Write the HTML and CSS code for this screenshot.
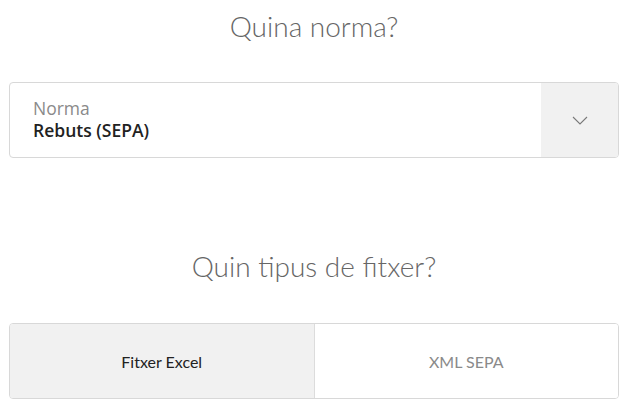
FILE: index.html
```html
<!DOCTYPE html>
<html lang="ca">
<head>
<meta charset="utf-8">
<title>Norma</title>
<link rel="stylesheet" href="styles.css">
</head>
<body>
<main class="page">
  <h1 class="title">Quina norma?</h1>
  <div class="select">
    <div class="select-body">
      <span class="select-label">Norma</span>
      <span class="select-value">Rebuts (SEPA)</span>
    </div>
    <div class="select-arrow">
      <svg width="16" height="9" viewBox="0 0 16 9" aria-hidden="true"><path d="M1 1 L8 8 L15 1" fill="none" stroke="#7a7a7a" stroke-width="1.1"/></svg>
    </div>
  </div>
  <h2 class="title title-second">Quin tipus de fitxer?</h2>
  <div class="toggle">
    <div class="toggle-btn active">Fitxer Excel</div>
    <div class="toggle-btn">XML SEPA</div>
  </div>
</main>
</body>
</html>
```

FILE: styles.css
```css
html, body {
  margin: 0;
  padding: 0;
  background: #fff;
}
.page {
  padding: 0 11px 0 9px;
  font-family: "Open Sans", "Liberation Sans", sans-serif;
}
.title {
  margin: 8px 0 0;
  font-family: Lato, "Open Sans", sans-serif;
  font-weight: 300;
  font-size: 28px;
  line-height: 36px;
  color: #666;
  text-align: center;
}
.title-second {
  margin-top: 90px;
}
.select {
  margin-top: 38px;
  height: 76px;
  box-sizing: border-box;
  border: 1px solid #d8d8d8;
  border-radius: 4px;
  display: flex;
  overflow: hidden;
}
.select-body {
  flex: 1;
  display: flex;
  flex-direction: column;
  justify-content: center;
  padding-left: 23px;
  padding-bottom: 1px;
}
.select-label {
  font-size: 17.5px;
  line-height: 22px;
  color: #8a8a8a;
}
.select-value {
  font-size: 17.5px;
  line-height: 23px;
  font-weight: 600;
  color: #222;
}
.select-arrow {
  width: 77px;
  background: #f1f1f1;
  display: flex;
  align-items: center;
  justify-content: center;
}
.toggle {
  margin-top: 39px;
  height: 76px;
  box-sizing: border-box;
  border: 1px solid #d8d8d8;
  border-radius: 4px;
  display: flex;
  overflow: hidden;
}
.toggle-btn {
  flex: 1;
  display: flex;
  align-items: center;
  justify-content: center;
  font-family: Lato, "Open Sans", sans-serif;
  font-size: 16px;
  color: #8a8a8a;
  background: #fff;
}
.toggle-btn + .toggle-btn {
  border-left: 1px solid #dcdcdc;
}
.toggle-btn.active {
  background: #f1f1f1;
  color: #222;
}
```
